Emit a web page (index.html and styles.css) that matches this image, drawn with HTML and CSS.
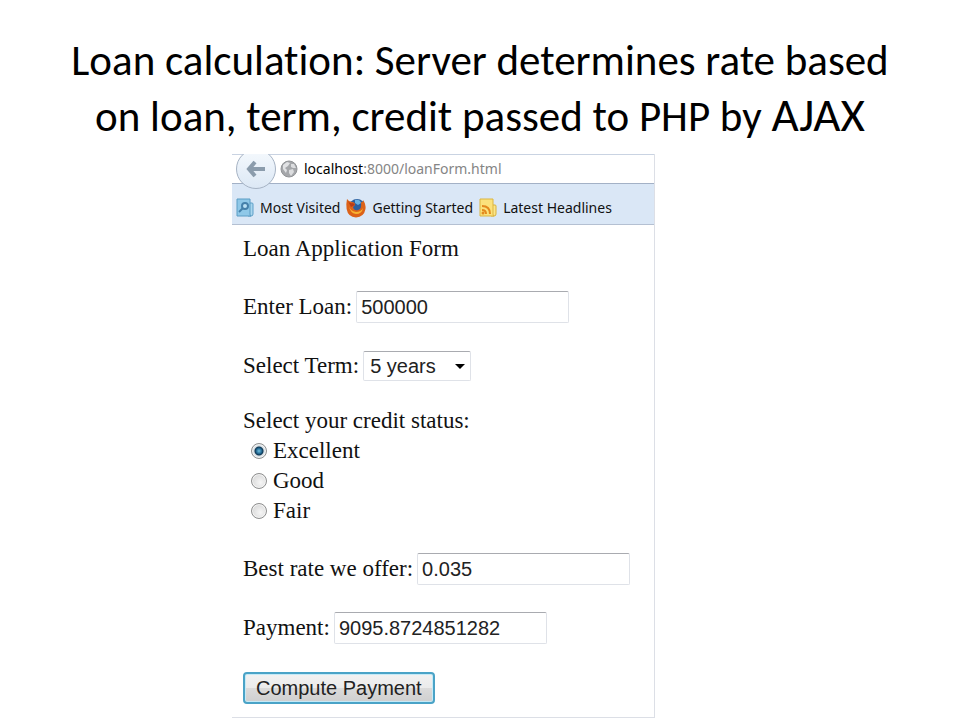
FILE: index.html
```html
<!DOCTYPE html>
<html lang="en">
<head>
  <meta charset="UTF-8" />
  <meta name="viewport" content="width=device-width, initial-scale=1" />
  <title>Loan calculation</title>
  <link rel="stylesheet" href="styles.css">
</head>
<body>
  <h1>Loan calculation: Server determines rate based<br />on loan, term, credit passed to PHP by <span class="big">AJAX</span></h1>

  <main class="browser">
    <div class="urlbar">
      <button class="back" type="button" aria-label="Back">
        <svg width="20" height="18" viewBox="0 0 20 18">
          <path d="M9 2 L3 9 L9 16 M3 9 H19" fill="none" stroke="#8b9cac" stroke-width="4" />
        </svg>
      </button>
      <svg class="globe" width="18" height="18" viewBox="0 0 18 18">
        <circle cx="9" cy="9" r="8" fill="#a5a7aa" stroke="#929497" />
        <path d="M3 5 L7 2 L10 3 L8 6 L5 8 L7 10 L6 13 L3 9Z" fill="#e1e2e4" />
        <path d="M11 4 L14 4 L16 8 L13 8 L11 7Z M9 10 L13 9 L14 12 L11 16 L9 13Z" fill="#dcdddf" />
      </svg>
      <span class="url"><b>localhost</b>:8000/loanForm.html</span>
    </div>
    <nav class="bookmarks">
      <a href="#">
        <svg width="18" height="20" viewBox="0 0 18 20">
          <path d="M13 5 H16 Q17 5 17 6 V16 Q17 18 15 18 H12Z" fill="#a9d6ee" stroke="#5c9fc8" />
          <path d="M1 1 H14 V16 Q14 18 15 18 H1Z" fill="#8fc8e8" stroke="#5b9cc4" />
          <circle cx="9" cy="8" r="3" fill="#b9e0f4" stroke="#4580aa" stroke-width="2" />
          <path d="M7 10 L3 14" stroke="#4580aa" stroke-width="2" />
        </svg>
        Most Visited
      </a>
      <a href="#">
        <svg width="20" height="20" viewBox="0 0 20 20">
          <circle cx="11" cy="9" r="8" fill="#2c5f9e" />
          <path d="M9 2 Q14 1 15 5 L12 7 L9 5Z" fill="#69b0e0" />
          <path d="M1 1 Q3 4 6 4 Q9 4 9 7 L7 9 Q8 13 12 12 Q16 11 15 4 Q17 5 17 2 Q20 6 19.500 11 Q18 19 10 19.500 Q2 19 .6 11 Q0 5 1 1Z" fill="#dc6219" />
          <path d="M3 8 Q4 13 10 14 Q15 14 17 10 Q16 16 10 16 Q4 15 3 8Z" fill="#f8b332" />
          <path d="M2 3 Q4 6 7 5 L9 7 L5 9Z" fill="#b83c18" />
        </svg>
        Getting Started
      </a>
      <a href="#">
        <svg width="18" height="20" viewBox="0 0 18 20">
          <path d="M13 7 H16 Q17 7 17 8 V16 Q17 18 15 18 H12Z" fill="#fbe58b" stroke="#d9b137" />
          <path d="M1 1 H14 V16 Q14 18 15 18 H1Z" fill="#fbe27c" stroke="#dcb540" />
          <path d="M3 8 Q11 8 11 16 M3 12 Q7 12 7 16" fill="none" stroke="#e38a1e" stroke-width="2" />
          <circle cx="4" cy="15" r="1.500" fill="#e38a1e" />
        </svg>
        Latest Headlines
      </a>
    </nav>

    <form class="loan">
      <p>Loan Application Form</p>
      <div class="row">
        <label for="loan">Enter Loan:</label>
        <input class="field" type="text" id="loan" value="500000" />
      </div>
      <div class="row">
        <label for="term">Select Term:</label>
        <div class="select">
          <select id="term">
            <option>5 years</option>
          </select>
          <svg class="caret" width="10" height="5" viewBox="0 0 10 5"><path d="M0 0 H10 L5 5Z" fill="#000" /></svg>
        </div>
      </div>
      <fieldset>
        <legend>Select your credit status:</legend>
        <label><input type="radio" name="credit" checked /> Excellent</label>
        <label><input type="radio" name="credit" /> Good</label>
        <label><input type="radio" name="credit" /> Fair</label>
      </fieldset>
      <div class="row">
        <label for="rate">Best rate we offer:</label>
        <input class="field" type="text" id="rate" value="0.035" />
      </div>
      <div class="row">
        <label for="payment">Payment:</label>
        <input class="field" type="text" id="payment" value="9095.8724851282" />
      </div>
      <button class="compute" type="button">Compute Payment</button>
    </form>
  </main>
</body>
</html>
```
FILE: styles.css
```css
* { margin:0; padding:0; box-sizing:border-box }
body { background:#fff; color:#000; }

h1 {
  padding-top:33px;
  font:400 43px/56px Carlito, Calibri, "Noto Sans", sans-serif;
  font-variant-ligatures:none;
  text-align:center;
}
h1 .big { font-size:47px; line-height:48px }

.browser {
  width:44%; min-width:423px;
  margin:9px auto 0 calc(50% - 248px);
  border-right:1px solid #dcdfe6;
  border-bottom:1px solid #dcdfe6;
  overflow:hidden;
}

/* toolbar */
.urlbar {
  display:flex; align-items:center;
  height:30px; padding-left:4px;
  background:#fff;
  border-top:1px solid #c9d3e2;
  border-bottom:1px solid #a3b1c6;
}
.back {
  display:flex; align-items:center; justify-content:center;
  flex:none; width:40px; height:40px;
  border:1px solid #a6b3c4; border-radius:50%;
  background:linear-gradient(#f5f9fd,#dce8f5);
}
.globe { margin:0 6px 0 4px }
.url { font:14px/20px "Noto Sans", sans-serif; color:#858585 }
.url b { font-weight:400; color:#000 }

.bookmarks {
  display:flex; align-items:center; gap:6px;
  height:41px; padding:8px 4px 0;
  background:#dae7f6;
  border-bottom:1px solid #b4c0d2;
}
.bookmarks a {
  display:flex; align-items:center; gap:6px;
  font:14px/20px "Noto Sans", sans-serif;
  color:#111; text-decoration:none; white-space:nowrap;
}

/* form */
.loan {
  padding:9px 11px 13px;
  font:23px/30px "Liberation Serif", serif;
  color:#111;
}
.row { display:flex; align-items:center; gap:4px; margin-top:27px; height:32px }
.field, select {
  font:20px/24px "Liberation Sans", sans-serif;
  color:#222; background:#fff;
  border:1px solid #dfe2e8; border-top-color:#a9abb0;
  border-radius:2px;
}
.field { width:213px; height:32px; padding:0 4px }
.select { display:flex; position:relative }
select { appearance:none; width:108px; height:30px; padding:0 6px }
.caret { position:absolute; right:6px; top:13px; pointer-events:none }

fieldset { border:none; margin-top:24px }
fieldset label { display:flex; align-items:center; gap:6px; padding-left:8px }
input[type=radio] {
  appearance:none; width:16px; height:16px;
  border:1px solid #8e8f8f; border-radius:50%;
  background:radial-gradient(circle at 60% 60%,#f6f6f6,#cfcfcf);
  box-shadow:inset 0 0 0 1px #f4f4f4;
}
input[type=radio]:checked {
  background:radial-gradient(circle,#6fc3e4 0,#1b5d86 3px,#0f3550 4px,#d8e0e5 5px);
}

.compute {
  margin-top:28px; padding:0 11px; height:32px;
  font:20px/26px "Liberation Sans", sans-serif;
  color:#222;
  border:2px solid #4aa3c7; border-radius:4px;
  background:linear-gradient(#f2f2f2,#ebebeb 50%,#dbdbdb 50%,#cfcfcf);
  box-shadow:inset 0 0 0 1px #c5eaf7;
}
```
